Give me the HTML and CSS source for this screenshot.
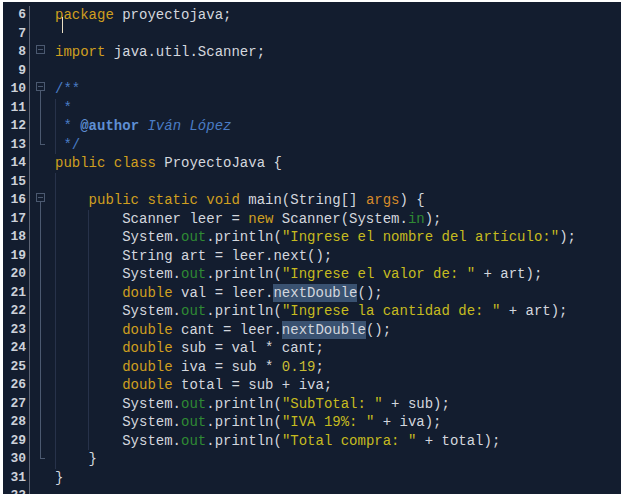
FILE: index.html
```html
<!DOCTYPE html>
<html lang="es">
<head>
    <meta charset="UTF-8">
    <meta name="viewport" content="width=device-width, initial-scale=1.0">
    <title>ProyectoJava.java</title>
    <link rel="stylesheet" href="styles.css">
</head>
<body>
    <div class="editor">
        <div class="caret"></div>

        <div class="line"><span class="num">6</span><span class="fold"></span><span class="code"><span class="k">package</span> proyectojava;</span></div>
        <div class="line"><span class="num">7</span><span class="fold"></span><span class="code"></span></div>
        <div class="line"><span class="num">8</span><span class="fold box"></span><span class="code"><span class="k">import</span> java.util.Scanner;</span></div>
        <div class="line"><span class="num">9</span><span class="fold"></span><span class="code"></span></div>
        <div class="line"><span class="num">10</span><span class="fold box open"></span><span class="code"><span class="c">/**</span></span></div>
        <div class="line"><span class="num">11</span><span class="fold mid"></span><span class="code g1"><span class="c"> *</span></span></div>
        <div class="line"><span class="num">12</span><span class="fold mid"></span><span class="code g1"><span class="c"> * <span class="ca">@author</span> <span class="ci">Iván López</span></span></span></div>
        <div class="line"><span class="num">13</span><span class="fold end"></span><span class="code g1"><span class="c"> */</span></span></div>
        <div class="line"><span class="num">14</span><span class="fold"></span><span class="code"><span class="k">public class</span> ProyectoJava {</span></div>
        <div class="line"><span class="num">15</span><span class="fold"></span><span class="code g1"></span></div>
        <div class="line"><span class="num">16</span><span class="fold box open"></span><span class="code g1">    <span class="k">public static void</span> main(String[] <span class="p">args</span>) {</span></div>
        <div class="line"><span class="num">17</span><span class="fold mid"></span><span class="code g2">        Scanner leer = <span class="k">new</span> Scanner(System.<span class="f">in</span>);</span></div>
        <div class="line"><span class="num">18</span><span class="fold mid"></span><span class="code g2">        System.<span class="f">out</span>.println(<span class="s">"Ingrese el nombre del artículo:"</span>);</span></div>
        <div class="line"><span class="num">19</span><span class="fold mid"></span><span class="code g2">        String art = leer.next();</span></div>
        <div class="line"><span class="num">20</span><span class="fold mid"></span><span class="code g2">        System.<span class="f">out</span>.println(<span class="s">"Ingrese el valor de: "</span> + art);</span></div>
        <div class="line"><span class="num">21</span><span class="fold mid"></span><span class="code g2">        <span class="k">double</span> val = leer.<span class="hl">nextDouble</span>();</span></div>
        <div class="line"><span class="num">22</span><span class="fold mid"></span><span class="code g2">        System.<span class="f">out</span>.println(<span class="s">"Ingrese la cantidad de: "</span> + art);</span></div>
        <div class="line"><span class="num">23</span><span class="fold mid"></span><span class="code g2">        <span class="k">double</span> cant = leer.<span class="hl">nextDouble</span>();</span></div>
        <div class="line"><span class="num">24</span><span class="fold mid"></span><span class="code g2">        <span class="k">double</span> sub = val * cant;</span></div>
        <div class="line"><span class="num">25</span><span class="fold mid"></span><span class="code g2">        <span class="k">double</span> iva = sub * <span class="n">0.19</span>;</span></div>
        <div class="line"><span class="num">26</span><span class="fold mid"></span><span class="code g2">        <span class="k">double</span> total = sub + iva;</span></div>
        <div class="line"><span class="num">27</span><span class="fold mid"></span><span class="code g2">        System.<span class="f">out</span>.println(<span class="s">"SubTotal: "</span> + sub);</span></div>
        <div class="line"><span class="num">28</span><span class="fold mid"></span><span class="code g2">        System.<span class="f">out</span>.println(<span class="s">"IVA 19%: "</span> + iva);</span></div>
        <div class="line"><span class="num">29</span><span class="fold mid"></span><span class="code g2">        System.<span class="f">out</span>.println(<span class="s">"Total compra: "</span> + total);</span></div>
        <div class="line"><span class="num">30</span><span class="fold end"></span><span class="code g1">    }</span></div>
        <div class="line"><span class="num">31</span><span class="fold"></span><span class="code">}</span></div>
        <div class="line"><span class="num">32</span><span class="fold"></span><span class="code"></span></div>
    </div>
</body>
</html>
```

FILE: styles.css
```css
body {
    margin: 0;
    background: #ffffff;
}
.editor {
    position: relative;
    margin: 2px 0 0 3px;
    width: 618px;
    height: 488px;
    padding-top: 4px;
    overflow: hidden;
    background: #131d2f;
    font-family: "Liberation Mono", "DejaVu Sans Mono", monospace;
    font-size: 14px;
    color: #d3d7de;
}
.caret {
    position: absolute;
    left: 59px;
    top: 15px;
    width: 1px;
    height: 16px;
    background: #eadfc4;
}
.line {
    display: flex;
    height: 18.5px;
    line-height: 18.5px;
}
.num {
    width: 23px;
    padding-right: 3px;
    text-align: right;
    border-right: 1px solid #5d6474;
    color: #cdd1d9;
    font-weight: bold;
    font-size: 13px;
}
.fold {
    position: relative;
    width: 25px;
    flex-shrink: 0;
}
.fold.box::before {
    content: '';
    position: absolute;
    left: 6px;
    top: 2px;
    width: 7px;
    height: 7px;
    border: 1px solid #4b5970;
}
.fold.box::after {
    content: '';
    position: absolute;
    left: 8px;
    top: 6px;
    width: 5px;
    height: 1px;
    background: #4b5970;
}
.fold.open {
    background: linear-gradient(#4b5970, #4b5970) 10px 11px / 1px 100% no-repeat;
}
.fold.mid {
    background: linear-gradient(#4b5970, #4b5970) 10px 0 / 1px 100% no-repeat;
}
.fold.end {
    background:
        linear-gradient(#4b5970, #4b5970) 10px 0 / 1px 9px no-repeat,
        linear-gradient(#4b5970, #4b5970) 10px 8px / 5px 1px no-repeat;
}
.code {
    flex: 1;
    white-space: pre;
}
.g1 {
    background: linear-gradient(#27324a, #27324a) 0 0 / 1px 100% no-repeat;
}
.g2 {
    background:
        linear-gradient(#27324a, #27324a) 0 0 / 1px 100% no-repeat,
        linear-gradient(#27324a, #27324a) 33px 0 / 1px 100% no-repeat;
}
.k {
    color: #cf9f1f;
}
.s {
    color: #c6bb1f;
}
.n {
    color: #c9be33;
}
.p {
    color: #d68a2a;
}
.f {
    color: #2f8a34;
}
.c {
    color: #4a7cc4;
}
.ca {
    color: #5f8fd4;
    font-weight: bold;
}
.ci {
    font-style: italic;
}
.hl {
    background: #3a5271;
    padding: 1px 0;
}
```
